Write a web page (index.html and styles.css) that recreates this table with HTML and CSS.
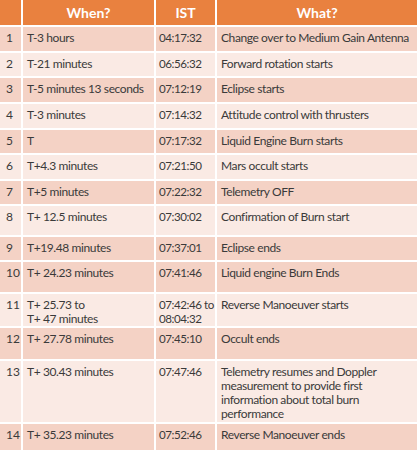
FILE: index.html
```html
<!DOCTYPE html>
<html>
<head>
<meta charset="utf-8">
<link rel="stylesheet" href="styles.css">
</head>
<body>
<div class="tbl">
  <div class="row head"><div class="c"></div><div class="c">When?</div><div class="c">IST</div><div class="c">What?</div></div>
  <div class="row dark"><div class="c n">1</div><div class="c">T-3 hours</div><div class="c t">04:17:32</div><div class="c">Change over to Medium Gain Antenna</div></div>
  <div class="row light"><div class="c n">2</div><div class="c">T-21 minutes</div><div class="c t">06:56:32</div><div class="c">Forward rotation starts</div></div>
  <div class="row dark"><div class="c n">3</div><div class="c">T-5 minutes 13 seconds</div><div class="c t">07:12:19</div><div class="c">Eclipse starts</div></div>
  <div class="row light"><div class="c n">4</div><div class="c">T-3 minutes</div><div class="c t">07:14:32</div><div class="c">Attitude control with thrusters</div></div>
  <div class="row dark"><div class="c n">5</div><div class="c">T</div><div class="c t">07:17:32</div><div class="c">Liquid Engine Burn starts</div></div>
  <div class="row light"><div class="c n">6</div><div class="c">T+4.3 minutes</div><div class="c t">07:21:50</div><div class="c">Mars occult starts</div></div>
  <div class="row dark"><div class="c n">7</div><div class="c">T+5 minutes</div><div class="c t">07:22:32</div><div class="c">Telemetry OFF</div></div>
  <div class="row light"><div class="c n">8</div><div class="c">T+ 12.5 minutes</div><div class="c t">07:30:02</div><div class="c">Confirmation of Burn start</div></div>
  <div class="row dark"><div class="c n">9</div><div class="c">T+19.48 minutes</div><div class="c t">07:37:01</div><div class="c">Eclipse ends</div></div>
  <div class="row dark"><div class="c n">10</div><div class="c">T+ 24.23 minutes</div><div class="c t">07:41:46</div><div class="c">Liquid engine Burn Ends</div></div>
  <div class="row light"><div class="c n">11</div><div class="c">T+ 25.73 to<br>T+ 47 minutes</div><div class="c t">07:42:46 to<br>08:04:32</div><div class="c">Reverse Manoeuver starts</div></div>
  <div class="row dark"><div class="c n">12</div><div class="c">T+ 27.78 minutes</div><div class="c t">07:45:10</div><div class="c">Occult ends</div></div>
  <div class="row light"><div class="c n">13</div><div class="c">T+ 30.43 minutes</div><div class="c t">07:47:46</div><div class="c">Telemetry resumes and Doppler<br>measurement to provide first<br>information about total burn<br>performance</div></div>
  <div class="row dark"><div class="c n">14</div><div class="c">T+ 35.23 minutes</div><div class="c t">07:52:46</div><div class="c">Reverse Manoeuver ends</div></div>
</div>
</body>
</html>
```
FILE: styles.css
```css
html, body {
  margin: 0;
  padding: 0;
  background: #ffffff;
}
.tbl {
  width: 417px;
  display: grid;
  grid-template-columns: 21px 131px 59px 1fr;
  grid-template-rows: 25px 24px 23px 24px 24px 23px 24px 23px 29px 23px 30px 32px 31px 61px 26px;
  gap: 2px;
  background: #ffffff;
  font-family: Lato, "Liberation Sans", sans-serif;
  font-size: 12px;
  letter-spacing: -0.4px;
  line-height: 14px;
  color: #3a3a3a;
}
.row {
  display: contents;
}
.c {
  padding: 4px 0 0 4px;
  white-space: nowrap;
  overflow: hidden;
}
.c.n {
  padding-left: 6px;
  letter-spacing: 0;
}
.c.t {
  padding-left: 3px;
  font-size: 11.6px;
  letter-spacing: -0.45px;
}
.head .c {
  background: #e9813f;
  color: #ffffff;
  font-weight: bold;
  font-size: 14px;
  letter-spacing: 0;
  padding: 0;
  display: flex;
  align-items: center;
  justify-content: center;
}
.dark .c {
  background: #f4d2c5;
}
.light .c {
  background: #faeae4;
}
```
